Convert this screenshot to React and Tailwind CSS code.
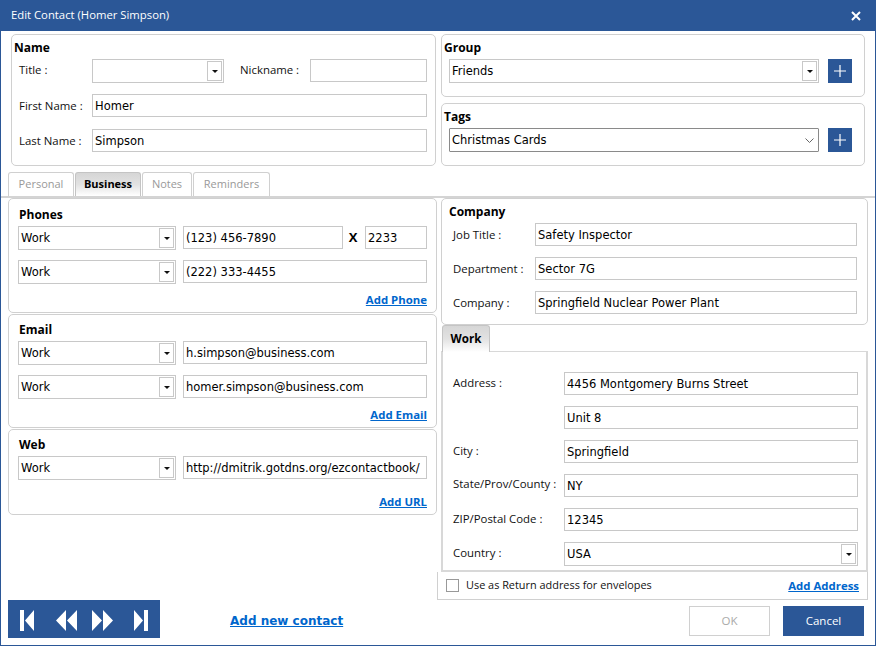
import React from "react";

const FIELD = "font-['DejaVu_Sans',sans-serif] text-[11.5px] text-black";
const LABEL = "text-[11.4px] text-[#111]";
const HEADING = "text-[12px] font-bold text-black leading-[16px]";
const LINK = "text-[11.4px] font-bold text-[#0066cc] underline leading-[16px]";

function Input({ value, className }) {
    return (
        <div className={`flex h-[23px] items-center border border-[#c8c8c8] bg-white pl-[2px] pt-[2px] ${FIELD} ${className}`}>
            {value}
        </div>
    );
}

function Select({ value, className }) {
    return (
        <div className={`flex h-[24px] items-center justify-between border border-[#c8c8c8] bg-white pl-[2px] pr-[1px] ${FIELD} ${className}`}>
            <span className="pt-[2px]">{value}</span>
            <span className="flex h-[20px] w-[15px] items-center justify-center border border-[#c8c8c8]">
                <svg width="6" height="3" viewBox="0 0 6 3">
                    <path d="M0 0h6L3 3z" fill="#111" />
                </svg>
            </span>
        </div>
    );
}

function Box({ className, children }) {
    return <div className={`rounded-[5px] border border-[#d0d0d0] bg-white ${className}`}>{children}</div>;
}

function PlusButton() {
    return (
        <button className="flex h-[24px] w-[24px] items-center justify-center bg-[#2b5797]">
            <svg width="14" height="14" viewBox="0 0 14 14">
                <path d="M7 1v12M1 7h12" stroke="#fff" strokeWidth="1.2" />
            </svg>
        </button>
    );
}

function Tab({ label, active, className }) {
    return (
        <div
            className={`flex items-center justify-center rounded-t-[3px] border border-b-0 ${
                active
                    ? "border-[#c4c4c4] bg-gradient-to-b from-[#d6d6d6] via-[#e2e2e2] to-white font-bold text-black"
                    : "border-[#d0d0d0] bg-white text-[#999]"
            } ${className}`}
        >
            {label}
        </div>
    );
}

function ContactRow({ value, className, children }) {
    return (
        <div className={`flex items-start ${className}`}>
            <Select value="Work" className="w-[158px]" />
            {children || <Input value={value} className="ml-[7px] w-[244px]" />}
        </div>
    );
}

function LabelRow({ label, labelClass, className, children }) {
    return (
        <div className={`flex items-start ${className}`}>
            <span className={`${LABEL} ${labelClass}`}>{label}</span>
            {children}
        </div>
    );
}

function NavIcon({ d }) {
    return (
        <svg width="24" height="24" viewBox="0 0 24 24">
            <path d={d} fill="#fff" />
        </svg>
    );
}

export default function App() {
    return (
        <div className="flex h-[646px] w-[876px] flex-col overflow-hidden border-x border-b border-[#2b5797] bg-white font-['Open_Sans',sans-serif]">
            {/* Title bar */}
            <div className="-mx-px flex h-[31px] shrink-0 items-center justify-between bg-[#2b5797] pl-[11px] pr-[15px] text-[11.3px] text-white">
                <span>Edit Contact (Homer Simpson)</span>
                <svg width="10" height="10" viewBox="0 0 10 10">
                    <path d="M1 1l8 8M9 1l-8 8" stroke="#fff" strokeWidth="2" />
                </svg>
            </div>

            {/* Name, group, tags */}
            <div className="mt-[3px] flex pl-[10px]">
                <Box className="h-[132px] w-[425px] px-[2px] pt-[5px]">
                    <div className={HEADING}>Name</div>
                    <LabelRow label="Title :" labelClass="w-[73px] leading-[22px]" className="ml-[5px] mt-[3px]">
                        <Select className="w-[132px]" />
                        <span className={`${LABEL} ml-[16px] w-[70px] leading-[22px]`}>Nickname :</span>
                        <Input className="w-[117px]" />
                    </LabelRow>
                    <LabelRow label="First Name :" labelClass="w-[73px] leading-[23px]" className="ml-[5px] mt-[11px]">
                        <Input value="Homer" className="w-[335px]" />
                    </LabelRow>
                    <LabelRow label="Last Name :" labelClass="w-[73px] leading-[23px]" className="ml-[5px] mt-[12px]">
                        <Input value="Simpson" className="w-[335px]" />
                    </LabelRow>
                </Box>
                <div className="ml-[5px] flex w-[424px] flex-col gap-[6px]">
                    <Box className="h-[63px] px-[2px] pt-[5px]">
                        <div className={HEADING}>Group</div>
                        <div className="ml-[5px] mt-[3px] flex">
                            <Select value="Friends" className="w-[370px]" />
                            <span className="ml-[9px]"><PlusButton /></span>
                        </div>
                    </Box>
                    <Box className="h-[63px] px-[2px] pt-[5px]">
                        <div className={HEADING}>Tags</div>
                        <div className="ml-[5px] mt-[3px] flex">
                            <div className={`flex h-[24px] w-[370px] items-center justify-between rounded-[1px] border border-[#8a8a8a] pl-[2px] pr-[4px] ${FIELD}`}>
                                <span className="pt-[2px]">Christmas Cards</span>
                                <svg width="9" height="5" viewBox="0 0 9 5">
                                    <path d="M.5.5l4 4 4-4" fill="none" stroke="#666" />
                                </svg>
                            </div>
                            <span className="ml-[9px]"><PlusButton /></span>
                        </div>
                    </Box>
                </div>
            </div>

            {/* Tabs */}
            <div className="mt-[6px] flex gap-px border-b-2 border-[#d4d4d4] pl-[7px]">
                <Tab label="Personal" className="h-[24px] w-[66px] text-[11px]" />
                <Tab label="Business" active className="h-[24px] w-[66px] text-[11px]" />
                <Tab label="Notes" className="h-[24px] w-[50px] text-[11px]" />
                <Tab label="Reminders" className="h-[24px] w-[77px] text-[11px]" />
            </div>

            {/* Two columns */}
            <div className="flex min-h-0 pl-[7px]">
                <div className="flex w-[429px] flex-col gap-[1px]">
                    <Box className="h-[115px] px-[9px] pt-[8px]">
                        <div className={`${HEADING} ml-px`}>Phones</div>
                        <ContactRow className="mt-[3px]">
                            <Input value="(123) 456-7890" className="ml-[7px] w-[160px]" />
                            <span className="w-[22px] pr-[2px] text-center text-[13px] font-bold leading-[23px]">X</span>
                            <Input value="2233" className="w-[62px]" />
                        </ContactRow>
                        <ContactRow value="(222) 333-4455" className="mt-[10px]" />
                        <div className="mt-[8px] flex justify-end"><a className={LINK}>Add Phone</a></div>
                    </Box>
                    <Box className="h-[114px] px-[9px] pt-[7px]">
                        <div className={`${HEADING} ml-px`}>Email</div>
                        <ContactRow value="h.simpson@business.com" className="mt-[3px]" />
                        <ContactRow value="homer.simpson@business.com" className="mt-[10px]" />
                        <div className="mt-[8px] flex justify-end"><a className={LINK}>Add Email</a></div>
                    </Box>
                    <Box className="h-[86px] px-[9px] pt-[7px]">
                        <div className={`${HEADING} ml-px`}>Web</div>
                        <ContactRow value="http://dmitrik.gotdns.org/ezcontactbook/" className="mt-[3px]" />
                        <div className="mt-[14px] flex justify-end"><a className={LINK}>Add URL</a></div>
                    </Box>
                </div>

                <div className="flex w-[431px] flex-col pl-[4px]">
                    <Box className="h-[127px] pl-[7px] pt-[5px]">
                        <div className={HEADING}>Company</div>
                        <LabelRow label="Job Title :" labelClass="w-[82px] leading-[23px]" className="ml-[4px] mt-[3px]">
                            <Input value="Safety Inspector" className="w-[322px]" />
                        </LabelRow>
                        <LabelRow label="Department :" labelClass="w-[82px] leading-[23px]" className="ml-[4px] mt-[11px]">
                            <Input value="Sector 7G" className="w-[322px]" />
                        </LabelRow>
                        <LabelRow label="Company :" labelClass="w-[82px] leading-[23px]" className="ml-[4px] mt-[11px]">
                            <Input value="Springfield Nuclear Power Plant" className="w-[322px]" />
                        </LabelRow>
                    </Box>
                    <Tab label="Work" active className="z-10 ml-px h-[27px] w-[48px] text-[11.6px]" />
                    <div className="-mt-px h-[221px] border-2 border-t border-[#d8d8d8] pl-[10px] pt-[20px]">
                        <LabelRow label="Address :" labelClass="w-[111px] leading-[22px]">
                            <div className="flex flex-col gap-[11px]">
                                <Input value="4456 Montgomery Burns Street" className="w-[294px]" />
                                <Input value="Unit 8" className="w-[294px]" />
                            </div>
                        </LabelRow>
                        <LabelRow label="City :" labelClass="w-[111px] leading-[22px]" className="mt-[11px]">
                            <Input value="Springfield" className="w-[294px]" />
                        </LabelRow>
                        <LabelRow label="State/Prov/County :" labelClass="w-[111px] leading-[20px]" className="mt-[11px]">
                            <Input value="NY" className="w-[294px]" />
                        </LabelRow>
                        <LabelRow label="ZIP/Postal Code :" labelClass="w-[111px] leading-[22px]" className="mt-[11px]">
                            <Input value="12345" className="w-[294px]" />
                        </LabelRow>
                        <LabelRow label="Country :" labelClass="w-[111px] leading-[22px]" className="mt-[11px]">
                            <Select value="USA" className="w-[294px]" />
                        </LabelRow>
                    </div>
                    <div className="-ml-[4px] flex h-[28px] items-center border-x border-b border-[#d0d0d0] pl-[8px] pr-[8px]">
                        <span className="h-[13px] w-[13px] border border-[#999]" />
                        <span className="ml-[7px] text-[10.9px] text-[#111]">Use as Return address for envelopes</span>
                        <a className={`${LINK} ml-auto`}>Add Address</a>
                    </div>
                </div>
            </div>

            {/* Footer */}
            <div className="flex items-center pl-[7px] pr-[11px]">
                <div className="flex h-[38px] w-[152px] items-center justify-between bg-[#2b5797] px-[8px]">
                    <NavIcon d="M4 3h4v21H4zM9 13.5L18 3v21z" />
                    <NavIcon d="M3 13.5L13 3v21zM14 13.5L24 3v21z" />
                    <NavIcon d="M1 3l10 10.5L1 24zM12 3l10 10.5L12 24z" />
                    <NavIcon d="M6 3l9 10.5L6 24zM16 3h4v21h-4z" />
                </div>
                <a className="ml-[70px] mt-[4px] font-['DejaVu_Sans',sans-serif] text-[12px] font-bold text-[#0066cc] underline">
                    Add new contact
                </a>
                <div className="ml-auto mt-[4px] flex gap-[13px]">
                    <button className="h-[30px] w-[81px] border border-[#d0d0d0] text-[11.5px] text-[#aaa]">OK</button>
                    <button className="h-[30px] w-[81px] bg-[#2b5797] text-[11.5px] text-white">Cancel</button>
                </div>
            </div>
        </div>
    );
}
